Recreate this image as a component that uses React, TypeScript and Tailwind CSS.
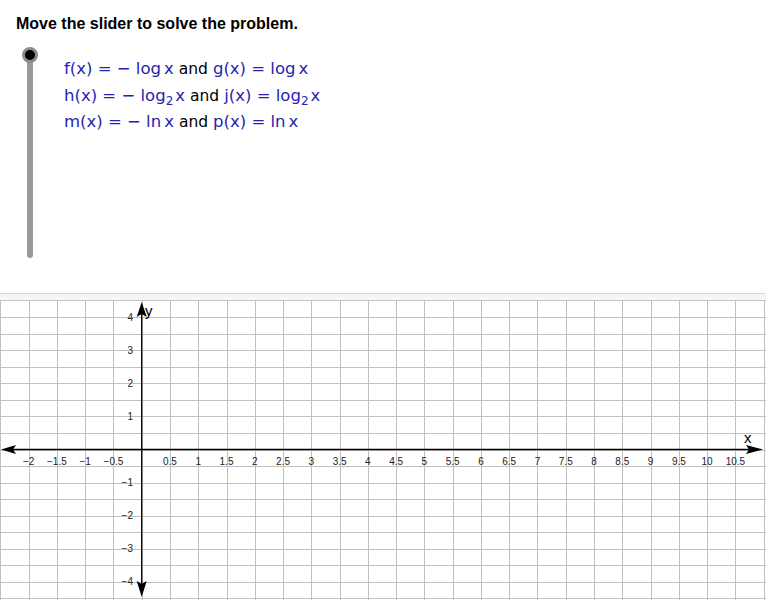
import React from "react";

const OX = 141.7;
const OY = 148.5;
const SX = 56.54;
const SY = 33.1;

function fmt(v: number) {
  const s = Math.abs(v).toString();
  return v < 0 ? "\u2212" + s : s;
}

function Graph() {
  const vlines: number[] = [];
  for (let k = -5; k <= 22; k++) vlines.push(OX + (k * SX) / 2);
  const hlines: number[] = [];
  for (let k = -8; k <= 9; k++) hlines.push(OY + (k * SY) / 2);
  const xl: number[] = [];
  for (let k = -4; k <= 21; k++) if (k !== 0) xl.push(k / 2);
  const yl = [4, 3, 2, 1, -1, -2, -3, -4];
  return (
    <svg width={766} height={299} className="block">
      <g stroke="#c0c0c0" strokeWidth={1} shapeRendering="crispEdges">
        {vlines.map((x, i) => (
          <line key={"v" + i} x1={Math.round(x) + 0.5} x2={Math.round(x) + 0.5} y1={0} y2={299} />
        ))}
        {hlines.map((y, i) => (
          <line key={"h" + i} y1={Math.round(y) + 0.5} y2={Math.round(y) + 0.5} x1={0} x2={766} />
        ))}
      </g>
      <g stroke="#000" strokeWidth={1.3}>
        <line x1={12} x2={752} y1={OY} y2={OY} />
        <line x1={OX} x2={OX} y1={12} y2={288} />
      </g>
      <g fill="#000">
        <path d={`M1 ${OY} L16 ${OY - 4.5} L13 ${OY} L16 ${OY + 4.5} Z`} />
        <path d={`M763 ${OY} L746 ${OY - 4.5} L749 ${OY} L746 ${OY + 4.5} Z`} />
        <path d={`M${OX} 1 L${OX - 5} 16 L${OX} 13 L${OX + 5} 16 Z`} />
        <path d={`M${OX} 296 L${OX - 5} 280 L${OX} 283 L${OX + 5} 280 Z`} />
      </g>
      <g fontFamily="'Liberation Sans', Arial, sans-serif" fontSize={10} fill="#222">
        {xl.map((v) => (
          <text key={"x" + v} x={OX + v * SX} y={164} textAnchor="middle">
            {fmt(v)}
          </text>
        ))}
        {yl.map((v) => (
          <text key={"y" + v} x={133} y={OY - v * SY + 3.5} textAnchor="end">
            {fmt(v)}
          </text>
        ))}
      </g>
      <g fontFamily="'Liberation Sans', Arial, sans-serif" fontSize={15} fill="#000">
        <text x={145} y={15}>y</text>
        <text x={744} y={142}>x</text>
      </g>
    </svg>
  );
}

const B = "text-[#2424b0]";

function Line({ children }: { children: React.ReactNode }) {
  return <div className="h-[26.5px] leading-[26.5px] whitespace-nowrap">{children}</div>;
}

function And() {
  return <span className="text-black text-[15.5px] mx-[5px]">and</span>;
}

function Sub2() {
  return <span className="text-[12px] relative top-[4px]">2</span>;
}

export default function App() {
  return (
    <div className="w-[766px] h-[600px] bg-white overflow-hidden flex flex-col">
      <div className="h-[293px] flex flex-col">
        <div
          className="pl-[16px] pt-[15px] text-[16px] leading-[18px] font-bold text-black"
          style={{ fontFamily: "'Liberation Sans', Arial, sans-serif" }}
        >
          Move the slider to solve the problem.
        </div>
        <div className="flex mt-[14px]">
          <div className="relative ml-[22px] w-[16px] h-[211px]">
            <div className="mx-auto mt-[8px] w-[6px] h-[203px] bg-[#9a9a9a] rounded-b-full" />
            <div className="absolute left-0 top-0 w-[16px] h-[16px] rounded-full bg-black border-[3px] border-[#8c8c8c]" />
          </div>
          <div
            className="ml-[26px] mt-[9px] text-[16.5px]"
            style={{ fontFamily: "'DejaVu Sans', sans-serif" }}
          >
            <Line>
              <span className={B}>
                f(x) = − log<span className="ml-[3px]">x</span>
              </span>
              <And />
              <span className={B}>
                g(x) = log<span className="ml-[3px]">x</span>
              </span>
            </Line>
            <Line>
              <span className={B}>
                h(x) = − log<Sub2 />
                <span className="ml-[2px]">x</span>
              </span>
              <And />
              <span className={B}>
                j(x) = log<Sub2 />
                <span className="ml-[2px]">x</span>
              </span>
            </Line>
            <Line>
              <span className={B}>
                m(x) = − ln<span className="ml-[3px]">x</span>
              </span>
              <And />
              <span className={B}>
                p(x) = ln<span className="ml-[3px]">x</span>
              </span>
            </Line>
          </div>
        </div>
      </div>
      <div className="h-[8px] border-t border-b border-t-[#dadada] border-b-[#c4c4c4] bg-[#f5f5f5]" />
      <Graph />
    </div>
  );
}
